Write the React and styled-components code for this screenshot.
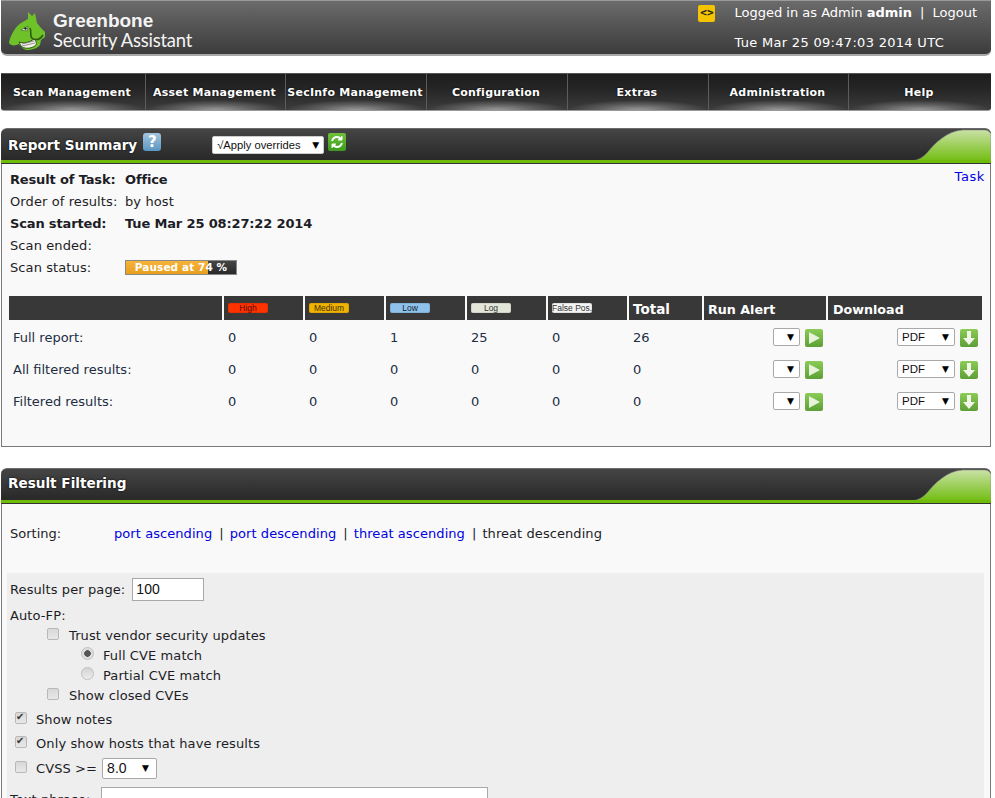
import React from "react";
import styled, { createGlobalStyle } from "styled-components";

const Global = createGlobalStyle`
  html, body { margin: 0; padding: 0; background: #fff; overflow: hidden; }
  body { font-family: "DejaVu Sans", Verdana, sans-serif; font-size: 13px; color: #1d1d26; }
`;

const Page = styled.div`
  width: 990px;
  height: 798px;
  margin-left: 1px;
  overflow: hidden;
`;

const Header = styled.header`
  height: 56px;
  box-sizing: border-box;
  display: flex;
  justify-content: space-between;
  background: linear-gradient(#6b6b6b 0%, #5a5a5a 35%, #3c3c3c 100%);
  border-top: 1px solid #9a9a9a;
  border-bottom: 2px solid #a8a8a8;
  border-radius: 0 0 6px 6px;
  color: #fff;
`;

const Brand = styled.div`
  display: flex;
  align-items: flex-start;
  padding: 10px 0 0 7px;
  gap: 6px;
`;

const BrandText = styled.div`
  display: flex;
  flex-direction: column;
  margin-top: 0;
  font-family: "Liberation Sans", Arial, sans-serif;
  color: #f4f4f4;
`;

const BrandTop = styled.span`
  font-size: 19px;
  font-weight: 700;
  line-height: 20px;
`;

const BrandBottom = styled.span`
  font-size: 18.4px;
  line-height: 18px;
  letter-spacing: -0.2px;
  font-family: "Lato", sans-serif;
`;

const Session = styled.div`
  display: grid;
  grid-template-columns: 36px auto;
  grid-template-rows: 24px 24px;
  padding: 0 14px 0 0;
  align-items: center;
  line-height: 16px;
`;

const CodeBadge = styled.div`
  width: 17px;
  height: 17px;
  background: #f5c400;
  border-radius: 2px;
  color: #222;
  font: 700 11px "DejaVu Sans Mono", monospace;
  text-align: center;
  line-height: 16px;
`;

const SessionText = styled.div`
  white-space: nowrap;
`;

const SessionSep = styled.span`
  margin: 0 8px 0 8px;
`;

const ClockText = styled.div`
  grid-column: 2;
  white-space: pre;
  margin-top: 12px;
  letter-spacing: 0.3px;
`;

const Menu = styled.nav`
  margin-top: 17px;
  height: 38px;
  display: grid;
  grid-template-columns: 145px 140px 141px 141px 141px 140px 142px;
  border-radius: 0 0 3px 3px;
  overflow: hidden;
  border-top: 1px solid #555;
  border-bottom: 1px solid #999;
  box-sizing: border-box;
`;

const MenuItem = styled.a`
  display: flex;
  align-items: center;
  justify-content: center;
  padding: 1px 2px 0 0;
  color: #fff;
  font-size: 11px;
  letter-spacing: 0.25px;
  font-weight: 700;
  white-space: nowrap;
  text-shadow: 0 0 2px #000;
  border-right: 1px solid #5c5c5c;
  &:last-child { border-right: 0; }
  background:
    radial-gradient(ellipse 50% 10px at 50% 100%, #9a9a9a 0%, rgba(140,140,140,0.45) 55%, rgba(100,100,100,0) 100%),
    linear-gradient(#1d1d1d, #252525 40%, #3c3c3c);
`;

const Panel = styled.section`
  margin-top: ${(p) => p.$top}px;
`;

const PanelHead = styled.div`
  height: 35px;
  box-sizing: border-box;
  display: flex;
  align-items: stretch;
  background: linear-gradient(#454545, #282828);
  border-top: 1px solid #6a6a6a;
  border-bottom: 3px solid #6fbb0a;
  border-radius: 6px 6px 0 0;
  box-shadow: 0 1px 0 #333;
  position: relative;
  overflow: hidden;
`;

const PanelTitle = styled.h2`
  margin: 0;
  padding: ${(p) => p.$pad}px 0 0 7px;
  color: #fff;
  font-size: 13.6px;
  line-height: 18px;
  font-weight: 700;
  text-shadow: 0 0 2px #000;
  white-space: nowrap;
`;

const HelpIcon = styled.div`
  width: 18px;
  height: 18px;
  margin: 4px 0 0 6px;
  border-radius: 3px;
  background: linear-gradient(#a5c6de, #5b95c2);
  color: #fff;
  font: 700 15px/18px "DejaVu Sans", sans-serif;
  text-align: center;
`;

const OverrideSelectWrap = styled.div`
  position: relative;
  margin: 7px 0 0 51px;
  width: 112px;
  height: 18px;
`;

const SelectWrap = styled.div`
  position: relative;
  display: inline-block;
  width: ${(p) => p.$w}px;
  height: ${(p) => p.$h}px;
  margin-left: ${(p) => p.$ml || 0}px;
  &::after {
    content: "▼";
    position: absolute;
    right: ${(p) => p.$arrow}px;
    top: 50%;
    transform: translateY(-50%);
    font: 9px "DejaVu Sans", sans-serif;
    color: #000;
    pointer-events: none;
  }
`;

const Select = styled.select`
  appearance: none;
  width: 100%;
  height: 100%;
  box-sizing: border-box;
  margin: 0;
  padding: 0 0 0 ${(p) => p.$pad}px;
  background: #fff;
  border: 1px solid ${(p) => p.$border || "#a9a9a9"};
  border-radius: 2px;
  font-family: "Liberation Sans", Arial, sans-serif;
  font-size: ${(p) => p.$size}px;
  color: #111;
`;

const SquareIcon = styled.div`
  flex: none;
  display: flex;
  align-items: center;
  justify-content: center;
  width: 18px;
  height: 18px;
  margin-top: 1px;
  border-radius: 2px;
  background: linear-gradient(#8ccb56, #5c9f36);
`;

const RefreshWrap = styled(SquareIcon)`
  margin: 4px 0 0 4px;
  background: linear-gradient(#6fc13c, #3c9a1c);
`;

const Curve = styled.svg`
  position: absolute;
  right: 0;
  top: -1px;
`;

const PanelBody = styled.div`
  box-sizing: border-box;
  height: ${(p) => p.$h}px;
  background: #f9f9f9;
  border-left: 1px solid #7a7a7a;
  border-right: 1px solid #7a7a7a;
  border-bottom: ${(p) => (p.$closed ? "1px solid #7a7a7a" : "0")};
`;

const SummaryTop = styled.div`
  display: flex;
  justify-content: space-between;
  padding: 5px 5px 0 8px;
  height: 133px;
  box-sizing: border-box;
`;

const InfoGrid = styled.div`
  display: grid;
  grid-template-columns: 115px auto;
  grid-auto-rows: 22px;
  align-items: center;
  letter-spacing: 0.1px;
`;

const InfoValue = styled.div`
  font-weight: ${(p) => (p.$bold ? 700 : 400)};
  letter-spacing: ${(p) => (p.$bold ? "-0.15px" : "0.1px")};
  white-space: nowrap;
`;

const TextLink = styled.a`
  color: #0000e0;
  white-space: nowrap;
`;

const TaskLink = styled(TextLink)`
  letter-spacing: 0.6px;
  padding-top: 1px;
`;

const Progress = styled.div`
  position: relative;
  width: 112px;
  height: 15px;
  box-sizing: border-box;
  border: 1px solid #888;
  background:
    linear-gradient(rgba(255,255,255,0.12), rgba(0,0,0,0.05)),
    linear-gradient(90deg, #f5a81f 0, #f5a81f 74.5%, #2c2c2c 74.5%, #2c2c2c 100%);
  color: #fff;
  text-align: center;
  font-size: 10.5px;
  font-weight: 700;
  line-height: 13px;
`;

const ReportTable = styled.div`
  display: grid;
  grid-template-columns: 213px 79px 79px 79px 79px 79px 73px 122px 154px;
  column-gap: 2px;
  margin-left: 7px;
  width: 973px;
`;

const HeadCell = styled.div`
  height: 24px;
  background: #383838;
  display: flex;
  align-items: center;
  padding-left: ${(p) => p.$pad || 4}px;
  padding-top: 2px;
  box-sizing: border-box;
  color: #fff;
  font-size: ${(p) => p.$size || 12.7}px;
  font-weight: 700;
  white-space: nowrap;
`;

const Badge = styled.div`
  width: 40px;
  height: 10px;
  margin-top: -3px;
  border-radius: 2px;
  background: ${(p) => p.$bg};
  color: ${(p) => p.$fg};
  font: 8.5px/10px "Liberation Sans", Arial, sans-serif;
  text-align: center;
  white-space: nowrap;
  box-shadow: inset 0 0 0 1px rgba(0,0,0,0.08);
`;

const Cell = styled.div`
  height: 32px;
  display: flex;
  align-items: center;
  padding: ${(p) => (p.$action ? `2px ${p.$right}px 0 0` : "2px 0 0 4px")};
  justify-content: ${(p) => (p.$action ? "flex-end" : "flex-start")};
  gap: 5px;
  box-sizing: border-box;
  color: #1d2d44;
`;

const SortRow = styled.div`
  display: grid;
  grid-template-columns: 104px auto;
  padding: 23px 0 0 8px;
  height: 70px;
  box-sizing: border-box;
  line-height: 16px;
`;

const SortLinks = styled.div`
  white-space: nowrap;
  letter-spacing: 0.07px;
`;

const SortSep = styled.span`
  margin: 0 6px 0 7px;
`;

const FilterBox = styled.div`
  margin: 0 6px 0 5px;
  height: 230px;
  background: #eeeeee;
  padding: 4px 0 0 3px;
  box-sizing: border-box;
  display: flex;
  flex-direction: column;
`;

const Row = styled.label`
  display: flex;
  flex: none;
  align-items: center;
  height: ${(p) => p.$h || 20}px;
  margin-top: ${(p) => p.$top || 0}px;
  padding-left: ${(p) => p.$indent || 0}px;
  gap: ${(p) => (p.$gap != null ? p.$gap : 10)}px;
  white-space: nowrap;
  letter-spacing: 0.1px;
`;

const TextInput = styled.input`
  box-sizing: border-box;
  width: ${(p) => p.$w}px;
  height: ${(p) => p.$h}px;
  margin: 0;
  padding: 0 0 0 3px;
  background: #fff;
  border: 1px solid #a9a9a9;
  font: 14px "Liberation Sans", Arial, sans-serif;
  color: #111;
  outline: 0;
`;

const Check = styled.input.attrs({ type: "checkbox" })`
  appearance: none;
  flex: none;
  width: 12px;
  height: 12px;
  margin: -3px 0 0 0;
  box-sizing: border-box;
  border: 1px solid #b8b8b8;
  border-radius: 2px;
  background: linear-gradient(#d8d8d8, #e8e8e8);
  position: relative;
  &:checked::after {
    content: "✔";
    position: absolute;
    left: 0;
    top: -2px;
    font: 10px/12px "DejaVu Sans", sans-serif;
    color: #333;
  }
`;

const Radio = styled.input.attrs({ type: "radio" })`
  appearance: none;
  flex: none;
  width: 13px;
  height: 13px;
  margin: -3px 0 0 0;
  box-sizing: border-box;
  border: 1px solid #c0c0c0;
  border-radius: 50%;
  background: ${(p) =>
    p.checked
      ? "radial-gradient(circle, #555 0 3px, #ddd 3.6px)"
      : "linear-gradient(#d4d4d4, #ececec)"};
`;

const Dog = () => (
  <svg width="39" height="40" viewBox="0 0 39 40" aria-hidden="true">
    <path
      d="M1 32 C2 25 7 16 13 12 L20 8 L20 1 L24 5 L27 2 L29 12 L33 17 L37 21 L37 26 L33 29 L32 34 C30 37 24 39 18 39 C15 38 13 36 11 33 C7 35 3 35 1 32 Z"
      fill="#6fc12a"
    />
    <path d="M13 19 L20 15 L19 20 Z" fill="#f4f4f4" stroke="#2d5a10" strokeWidth="0.6" />
    <circle cx="17.5" cy="17.5" r="1.2" fill="#1c1c1c" />
    <path
      d="M22 17 C24 21 21 26 25 28 C28 29 32 29 35 24"
      fill="none"
      stroke="#2d5a10"
      strokeWidth="1.6"
    />
    <path d="M11 31 C16 33 22 31 26 28 C29 31 29 33 27 35 C22 38 16 38 13 35 Z" fill="#f2f2e8" stroke="#2d5a10" strokeWidth="1" />
    <path d="M14 33 L26 30 M14 35 L27 32" stroke="#777" strokeWidth="0.8" />
  </svg>
);

const TopCurve = () => (
  <Curve width="84" height="35" viewBox="0 0 84 35" aria-hidden="true">
    <path
      d="M0 33 C10 33 14 31 20 25 C28 15 40 3 56 2 L78 2 Q82 2 84 6 L84 35 L0 35 Z"
      fill="url(#curveFill)"
      stroke="#8a8a8a"
      strokeWidth="0.6"
    />
  </Curve>
);

const CurveDefs = styled.svg`
  position: absolute;
  width: 0;
  height: 0;
`;

const RefreshGlyph = () => (
  <svg width="14" height="14" viewBox="0 0 14 14" fill="none" stroke="#fff" strokeWidth="2" aria-hidden="true">
    <path d="M2 6 C3 3 5 2 7 2 C9 2 10 3 11 4" />
    <path d="M12 8 C11 11 9 12 7 12 C5 12 4 11 3 10" />
    <path d="M12 1 L12 5 L8 5" fill="#fff" strokeWidth="1" />
    <path d="M2 13 L2 9 L6 9" fill="#fff" strokeWidth="1" />
  </svg>
);

const PlayGlyph = () => (
  <svg width="14" height="14" viewBox="0 0 14 14" aria-hidden="true">
    <path d="M2 1 L13 7 L2 13 Z" fill="#e6f3da" />
  </svg>
);

const DownGlyph = () => (
  <svg width="14" height="16" viewBox="0 0 14 16" aria-hidden="true">
    <path d="M5 1 H9 V8 H13 L7 15 L1 8 H5 Z" fill="#f0f7e8" />
  </svg>
);

const severities = [
  { label: "High", bg: "#ff3300", fg: "#5a0c00" },
  { label: "Medium", bg: "#f2b300", fg: "#3f2f00" },
  { label: "Low", bg: "#8fc2ea", fg: "#123" },
  { label: "Log", bg: "#e4e6da", fg: "#333" },
  { label: "False Pos.", bg: "#f4f4f4", fg: "#333" },
];

const rows = [
  ["Full report:", "0", "0", "1", "25", "0", "26"],
  ["All filtered results:", "0", "0", "0", "0", "0", "0"],
  ["Filtered results:", "0", "0", "0", "0", "0", "0"],
];

const menu = [
  "Scan Management",
  "Asset Management",
  "SecInfo Management",
  "Configuration",
  "Extras",
  "Administration",
  "Help",
];

export default function App() {
  return (
    <Page>
      <Global />
      <CurveDefs aria-hidden="true">
        <defs>
          <linearGradient id="curveFill" x1="0" y1="0" x2="0" y2="1">
            <stop offset="0" stopColor="#c9e1a5" />
            <stop offset="1" stopColor="#6cbb08" />
          </linearGradient>
        </defs>
      </CurveDefs>
      <Header>
        <Brand>
          <Dog />
          <BrandText>
            <BrandTop>Greenbone</BrandTop>
            <BrandBottom>Security Assistant</BrandBottom>
          </BrandText>
        </Brand>
        <Session>
          <CodeBadge>&lt;&gt;</CodeBadge>
          <SessionText>
            Logged in as Admin <b>admin</b>
            <SessionSep>|</SessionSep>Logout
          </SessionText>
          <ClockText>Tue Mar 25 09:47:03 2014 UTC</ClockText>
        </Session>
      </Header>

      <Menu>
        {menu.map((m) => (
          <MenuItem key={m}>{m}</MenuItem>
        ))}
      </Menu>

      <Panel $top={17}>
        <PanelHead>
          <PanelTitle $pad={7}>Report Summary</PanelTitle>
          <HelpIcon>?</HelpIcon>
          <OverrideSelectWrap>
            <SelectWrap $w={112} $h={18} $arrow={5}>
              <Select $pad={4} $size={11.2} $border="#ccc" defaultValue="a">
                <option value="a">√Apply overrides</option>
              </Select>
            </SelectWrap>
          </OverrideSelectWrap>
          <RefreshWrap>
            <RefreshGlyph />
          </RefreshWrap>
          <TopCurve />
        </PanelHead>
        <PanelBody $h={284} $closed>
          <SummaryTop>
            <InfoGrid>
              <InfoValue $bold>Result of Task:</InfoValue>
              <InfoValue $bold>Office</InfoValue>
              <InfoValue>Order of results:</InfoValue>
              <InfoValue>by host</InfoValue>
              <InfoValue $bold>Scan started:</InfoValue>
              <InfoValue $bold>Tue Mar 25 08:27:22 2014</InfoValue>
              <InfoValue>Scan ended:</InfoValue>
              <InfoValue />
              <InfoValue>Scan status:</InfoValue>
              <Progress>Paused at 74 %</Progress>
            </InfoGrid>
            <TaskLink>Task</TaskLink>
          </SummaryTop>
          <ReportTable>
            <HeadCell />
            {severities.map((s) => (
              <HeadCell key={s.label}>
                <Badge $bg={s.bg} $fg={s.fg}>{s.label}</Badge>
              </HeadCell>
            ))}
            <HeadCell $size={13.5}>Total</HeadCell>
            <HeadCell>Run Alert</HeadCell>
            <HeadCell $pad={5}>Download</HeadCell>
            {rows.map((r) => (
              <React.Fragment key={r[0]}>
                {r.map((v, i) => (
                  <Cell key={i}>{v}</Cell>
                ))}
                <Cell $action $right={3}>
                  <SelectWrap $w={27} $h={18} $arrow={6}>
                    <Select $pad={3} $size={12} />
                  </SelectWrap>
                  <SquareIcon>
                    <PlayGlyph />
                  </SquareIcon>
                </Cell>
                <Cell $action $right={4}>
                  <SelectWrap $w={58} $h={18} $arrow={6}>
                    <Select $pad={4} $size={11.5} defaultValue="PDF">
                      <option>PDF</option>
                    </Select>
                  </SelectWrap>
                  <SquareIcon>
                    <DownGlyph />
                  </SquareIcon>
                </Cell>
              </React.Fragment>
            ))}
          </ReportTable>
        </PanelBody>
      </Panel>

      <Panel $top={21}>
        <PanelHead>
          <PanelTitle $pad={5}>Result Filtering</PanelTitle>
          <TopCurve />
        </PanelHead>
        <PanelBody $h={296}>
          <SortRow>
            <span>Sorting:</span>
            <SortLinks>
              <TextLink>port ascending</TextLink>
              <SortSep>|</SortSep>
              <TextLink>port descending</TextLink>
              <SortSep>|</SortSep>
              <TextLink>threat ascending</TextLink>
              <SortSep>|</SortSep>
              threat descending
            </SortLinks>
          </SortRow>
          <FilterBox>
            <Row $h={24} $gap={7} as="div">
              <span>Results per page:</span>
              <TextInput $w={72} $h={23} defaultValue="100" />
            </Row>
            <Row $h={20} $top={4} as="div">Auto-FP:</Row>
            <Row $indent={37} $gap={10}><Check />Trust vendor security updates</Row>
            <Row $indent={71} $gap={9}><Radio checked readOnly />Full CVE match</Row>
            <Row $indent={71} $gap={9}><Radio readOnly />Partial CVE match</Row>
            <Row $indent={37} $gap={10}><Check />Show closed CVEs</Row>
            <Row $indent={5} $top={4} $gap={9}><Check defaultChecked />Show notes</Row>
            <Row $indent={5} $top={4} $gap={9}><Check defaultChecked />Only show hosts that have results</Row>
            <Row $indent={5} $top={4} $h={22} $gap={9}>
              <Check />
              <span>CVSS &gt;=</span>
              <SelectWrap $w={55} $h={21} $arrow={8} $ml={-4}>
                <Select $pad={4} $size={14} defaultValue="8.0">
                  <option>8.0</option>
                </Select>
              </SelectWrap>
            </Row>
            <Row $top={8} $h={24} $gap={10} as="div">
              <span>Text phrase:</span>
              <TextInput $w={387} $h={24} />
            </Row>
          </FilterBox>
        </PanelBody>
      </Panel>
    </Page>
  );
}
